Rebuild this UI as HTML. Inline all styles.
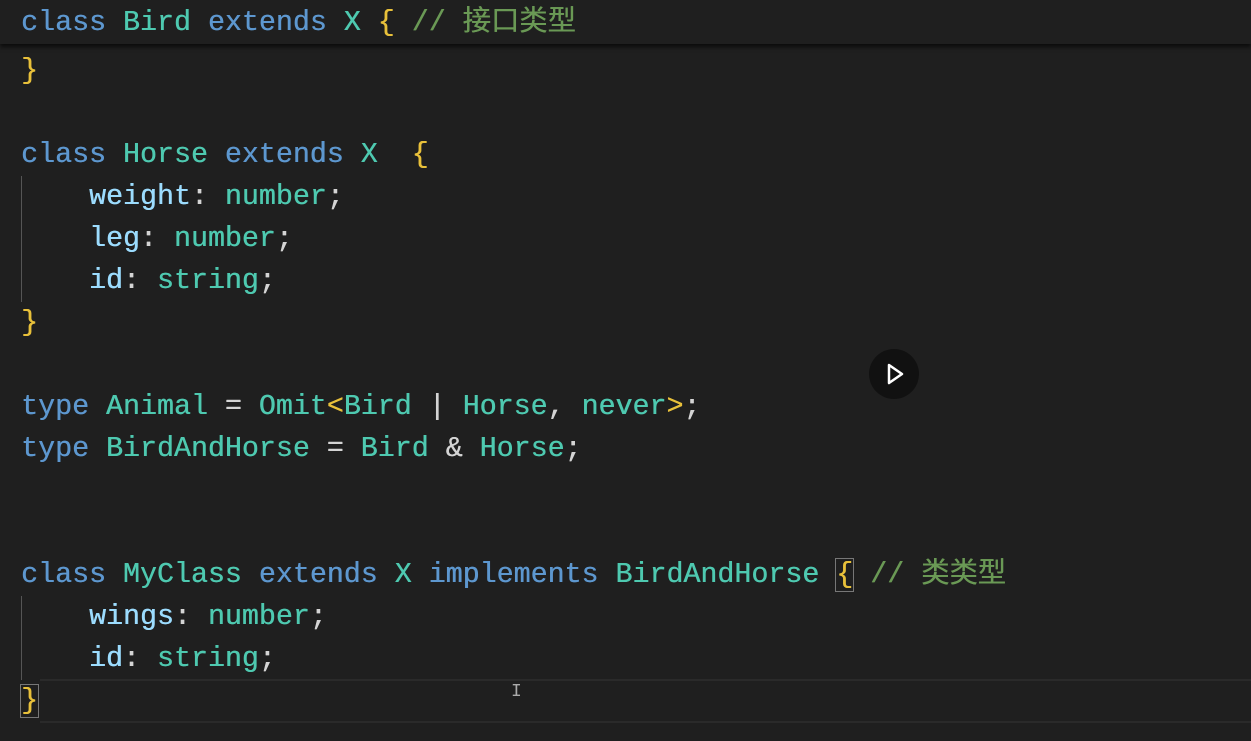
<!DOCTYPE html>
<html><head><meta charset="utf-8"><style>
body{margin:0;width:1251px;height:741px;background:#1f1f1f;overflow:hidden;position:relative}
.code{position:absolute;left:21px;top:8px;font-family:"Liberation Mono","Noto Sans CJK SC",monospace;font-size:28.3px;line-height:42px;color:#d4d4d4;white-space:pre;text-shadow:0.4px 0 0 currentColor}
.k{color:#5d97cf}.t{color:#4ec9b0}.p{color:#9cdcfe}.c{color:#6a9955}.b{color:#e8c03a}.o{color:#d4d4d4}
.sticky{position:absolute;left:0;top:0;width:1251px;height:44px;background:#1f1f1f;box-shadow:0 3px 4px #0c0c0c}
.guide{position:absolute;left:21px;width:1px;background:#555}
.play{position:absolute;left:869px;top:349px;width:50px;height:50px;border-radius:50%;background:#111}
.cur{position:absolute;left:40px;top:679px;width:1211px;height:40px;border-top:2px solid #2a2a2a;border-bottom:2px solid #2a2a2a}
</style></head><body>
<div class="cur"></div>
<div class="guide" style="top:176px;height:126px"></div>
<div class="guide" style="top:596px;height:84px"></div>
<div class="code">


<span class="k">class</span> <span class="t">Horse</span> <span class="k">extends</span> <span class="t">X</span>  <span class="b">{</span>
    <span class="p">weight</span>: <span class="t">number</span>;
    <span class="p">leg</span>: <span class="t">number</span>;
    <span class="p">id</span>: <span class="t">string</span>;
<span class="b">}</span>

<span class="k">type</span> <span class="t">Animal</span> = <span class="t">Omit</span><span class="b">&lt;</span><span class="t">Bird</span> | <span class="t">Horse</span>, <span class="t">never</span><span class="b">&gt;</span>;
<span class="k">type</span> <span class="t">BirdAndHorse</span> = <span class="t">Bird</span> &amp; <span class="t">Horse</span>;


<span class="k">class</span> <span class="t">MyClass</span> <span class="k">extends</span> <span class="t">X</span> <span class="k">implements</span> <span class="t">BirdAndHorse</span> <span class="b" style="outline:1px solid #777">{</span> <span class="c">// 类类型</span>
    <span class="p">wings</span>: <span class="t">number</span>;
    <span class="p">id</span>: <span class="t">string</span>;
<span class="b" style="outline:1px solid #777">}</span></div>
<div class="sticky"><div class="code" style="top:2px;left:21px"><span class="k">class</span> <span class="t">Bird</span> <span class="k">extends</span> <span class="t">X</span> <span class="b">{</span> <span class="c">// 接口类型</span></div></div>
<div class="code" style="top:50px"><span class="b">}</span></div>
<div class="play"><svg width="50" height="50" viewBox="0 0 50 50"><path d="M20 16 L33 25 L20 34 Z" fill="none" stroke="#fff" stroke-width="2.5" stroke-linejoin="round"/></svg></div>
<div style="position:absolute;left:511px;top:682px;color:#aaa;font:18px 'Liberation Mono',monospace">I</div>
</body></html>
